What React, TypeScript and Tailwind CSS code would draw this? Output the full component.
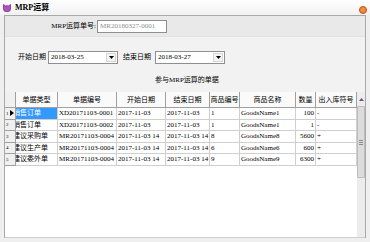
import React from "react";

const F = '"Liberation Serif","Noto Sans CJK SC",serif';

const cols = [
  { w: 42, t: "单据类型" },
  { w: 59, t: "单据编号" },
  { w: 49, t: "开始日期" },
  { w: 44, t: "结束日期" },
  { w: 30, t: "商品编号" },
  { w: 56, t: "商品名称" },
  { w: 20, t: "数量" },
  { w: 41, t: "出入库符号" },
];

const rows = [
  ["销售订单", "XD20171103-0001", "2017-11-03", "2017-11-03", "1", "GoodsName1", "100", "-"],
  ["销售订单", "XD20171103-0002", "2017-11-03", "2017-11-03", "1", "GoodsName1", "1", "-"],
  ["建议采购单", "MR20171103-0004", "2017-11-03 14", "2017-11-03 14", "8", "GoodsName8", "5600", "+"],
  ["建议生产单", "MR20171103-0004", "2017-11-03 14", "2017-11-03 14", "6", "GoodsName6", "600", "+"],
  ["建议委外单", "MR20171103-0004", "2017-11-03 14", "2017-11-03 14", "9", "GoodsName9", "6300", "+"],
];

function Combo({ v }: { v: string }) {
  return (
    <div className="flex h-[13px] w-[70px] items-center border border-[#8f8f8f] bg-white">
      <div className="flex-1 overflow-hidden whitespace-nowrap pl-[2px] text-[7px] leading-[11px] text-black">{v}</div>
      <div className="mr-px flex h-[9px] w-[10px] items-center justify-center border border-[#d6d6d6] bg-[#f4f4f4]">
        <svg width="5" height="3" viewBox="0 0 5 3"><path d="M0 0h5L2.5 3z" fill="#000" /></svg>
      </div>
    </div>
  );
}

export default function App() {
  return (
    <div className="relative h-[242px] w-[370px] overflow-hidden bg-[#efefef]" style={{ fontFamily: F }}>
      {/* title bar */}
      <div className="flex h-[15px] items-center bg-gradient-to-b from-[#ffffff] to-[#f1f1f1] pl-[3px]">
        <svg width="8" height="8" viewBox="0 0 8 8" className="mr-[4px]">
          <path d="M0.5 0.5 L2.5 2 Q4 1.4 5.5 2 L7.5 0.5 L7.5 5 Q7.5 7.8 4 7.8 Q0.5 7.8 0.5 5 Z" fill="#b14fc8" stroke="#6d2480" strokeWidth="0.7" />
        </svg>
        <span className="whitespace-nowrap text-[8px] font-bold leading-[10px] text-black">MRP运算</span>
        <div className="flex-1" />
        <div className="mr-[3px] mt-[5px] h-[8px] w-[8px] rounded-full border border-[#b5541c] bg-[#f08a3c]" />
      </div>
      {/* frame */}
      <div className="ml-[4px] flex h-[223px] w-[362px] flex-col border-l border-r border-t border-[#a9a9a9]">
        <div className="flex h-[21px] items-center border-b border-[#e2e2e2] bg-[#e9e9e9]">
          <div className="w-[91px] whitespace-nowrap text-right text-[7px] leading-[10px] text-black">MRP运算单号:</div>
          <div className="ml-[1px] h-[13px] w-[70px] overflow-hidden whitespace-nowrap border border-[#8f8f8f] bg-white pl-[2px] text-[7px] leading-[11px] text-[#8d8d8d]">MR20180327-0001</div>
        </div>
        <div className="flex h-[55px] flex-col bg-[#f2f2f2]">
          <div className="mt-[13px] flex h-[14px] items-center">
            <div className="ml-[13px] w-[29px] whitespace-nowrap text-[7px] leading-[10px]">开始日期</div>
            <div className="ml-[1px]"><Combo v="2018-03-25" /></div>
            <div className="ml-[5px] w-[31px] whitespace-nowrap text-[7px] leading-[10px]">结束日期</div>
            <div className="ml-[1px]"><Combo v="2018-03-27" /></div>
          </div>
          <div className="mt-[11px] whitespace-nowrap pl-[150px] text-[7px] leading-[10px]">参与MRP运算的单据</div>
        </div>
        {/* grid */}
        <div className="flex h-[146px] border-b border-[#cfcfcf] bg-white">
          <div className="flex w-[352px] shrink-0 flex-col">
            <div className="flex h-[16px] bg-[#fafafa]">
              <div className="w-[11px] shrink-0 border-b border-r border-[#a0a0a0] bg-[#f0f0f0]" />
              {cols.map((c, i) => (
                <div key={i} style={{ width: c.w }} className="flex shrink-0 items-center justify-center overflow-hidden whitespace-nowrap border-b border-r border-[#a0a0a0] text-[7px] leading-[10px] text-black">
                  {c.t}
                </div>
              ))}
            </div>
            {rows.map((r, ri) => (
              <div key={ri} className="flex h-[11.5px]">
                <div className="relative flex w-[11px] shrink-0 items-center border-b border-r border-[#a0a0a0] bg-[#f0f0f0] pl-[1px] text-[5px] leading-[7px]">
                  {ri + 1}
                  {ri === 0 && (
                    <svg width="4" height="6" viewBox="0 0 4 6" className="ml-[1px]"><path d="M0 0L4 3L0 6Z" fill="#000" /></svg>
                  )}
                </div>
                {r.map((v, ci) => {
                  const sel = ri === 0 && ci === 0;
                  const right = ci === 6;
                  return (
                    <div
                      key={ci}
                      style={{ width: cols[ci].w }}
                      className={`flex shrink-0 items-center overflow-hidden whitespace-nowrap border-b border-r border-[#cfcfcf] text-[7px] leading-[10px] ${sel ? "bg-[#3399ff] text-white" : "text-black"} ${right ? "justify-end pr-[1px]" : "pl-[1px]"}`}
                    >
                      <span className={ci === 0 ? "-ml-[4px]" : ""}>{v}</span>
                    </div>
                  );
                })}
              </div>
            ))}
          </div>
          {/* scrollbar */}
          <div className="flex w-[8px] shrink-0 flex-col bg-[#ececec]">
            <div className="flex h-[14px] items-center justify-center">
              <svg width="5" height="3" viewBox="0 0 5 3"><path d="M0 3h5L2.5 0z" fill="#606060" /></svg>
            </div>
            <div className="flex h-[72px] flex-col items-center justify-center rounded-[1px] border border-[#bcbcbc] bg-[#dcdcdc]">
              <div className="mb-[1px] h-px w-[4px] bg-[#8a8a8a]" />
              <div className="mb-[1px] h-px w-[4px] bg-[#8a8a8a]" />
              <div className="h-px w-[4px] bg-[#8a8a8a]" />
            </div>
          </div>
        </div>
      </div>
    </div>
  );
}
